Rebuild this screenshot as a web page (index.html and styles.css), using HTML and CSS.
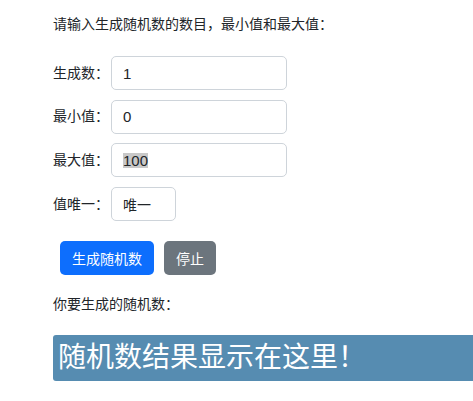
FILE: index.html
```html
<!DOCTYPE html>
<html lang="zh-CN">
<head>
<meta charset="utf-8">
<title>随机数生成</title>
<link rel="stylesheet" href="styles.css">
</head>
<body>
<div class="page">
  <p class="intro">请输入生成随机数的数目，最小值和最大值：</p>
  <div class="row">
    <label class="label" for="count">生成数：</label>
    <input class="field" id="count" type="text" value="1">
  </div>
  <div class="row">
    <label class="label" for="min">最小值：</label>
    <input class="field" id="min" type="text" value="0">
  </div>
  <div class="row">
    <span class="label">最大值：</span>
    <div class="field fake"><span class="sel">100</span></div>
  </div>
  <div class="row">
    <label class="label" for="uniq">值唯一：</label>
    <input class="field short" id="uniq" type="text" value="唯一">
  </div>
  <div class="actions">
    <button class="btn primary" type="button">生成随机数</button>
    <button class="btn secondary" type="button">停止</button>
  </div>
  <p class="caption">你要生成的随机数：</p>
  <div class="result">随机数结果显示在这里！</div>
</div>
</body>
</html>
```

FILE: styles.css
```css
html, body {
  margin: 0;
  padding: 0;
  background: #fff;
}
body {
  font-family: "Liberation Sans", "Noto Sans CJK SC", sans-serif;
  font-size: 14px;
  color: #212529;
  overflow: hidden;
}
.page {
  padding: 14px 0 0 53px;
  overflow: hidden;
}
.intro {
  margin: 0 0 21px 0;
  line-height: 21px;
}
.row {
  display: flex;
  align-items: center;
  height: 34px;
  margin-bottom: 9.7px;
}
.label {
  width: 58px;
  flex: none;
  line-height: 21px;
}
.field {
  box-sizing: border-box;
  width: 176px;
  height: 34px;
  padding: 0 11px;
  border: 1px solid #ced4da;
  border-radius: 5px;
  font-family: inherit;
  font-size: 15px;
  color: #212529;
  background: #fff;
  outline: none;
}
.fake {
  display: flex;
  align-items: center;
}
.sel {
  background: #c8c8c8;
  line-height: 15px;
}
.short {
  width: 65px;
  font-size: 14px;
}
.actions {
  display: flex;
  gap: 10px;
  margin: 20px 0 0 7px;
}
.btn {
  box-sizing: border-box;
  height: 34px;
  padding: 0 12px;
  border: none;
  border-radius: 5px;
  font-family: inherit;
  font-size: 14px;
  color: #fff;
}
.primary {
  background: #0d6efd;
}
.secondary {
  background: #6c757d;
}
.caption {
  margin: 19px 0 0 0;
  line-height: 21px;
}
.result {
  box-sizing: border-box;
  width: 450px;
  height: 46px;
  margin-top: 20px;
  padding: 0 5px;
  border-radius: 3px;
  background: #568cb1;
  color: #fff;
  font-size: 28px;
  line-height: 46px;
  white-space: nowrap;
}
```
